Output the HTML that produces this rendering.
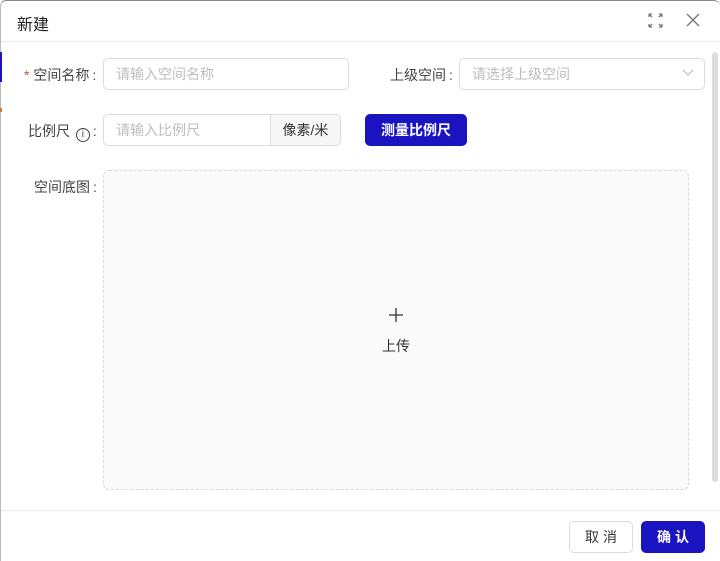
<!DOCTYPE html>
<html><head><meta charset="utf-8"><style>
*{box-sizing:border-box;margin:0;padding:0}
body{width:720px;height:561px;overflow:hidden;background:#fff;font-family:"Liberation Sans","Noto Sans CJK SC",sans-serif;font-size:14px;color:#333;position:relative}
.frame{position:absolute;left:0;top:0;width:720px;height:561px;border-top:1px solid #888;border-left:1px solid #bbb;border-radius:6px 6px 0 0}
.abs{position:absolute}
.title{left:17px;top:11px;font-size:16px;color:#222}
.hline{left:1px;right:0;height:1px;background:#eaeaea}
.lbl{font-size:14px;color:#444;white-space:nowrap}
.c{margin-left:3px}
.inp{border:1px solid #dcdcdc;border-radius:5px;background:#fff;color:#bdbdbd;font-size:14px;padding-left:12px;line-height:30px}
.btn{border-radius:5px;text-align:center;font-size:14px}
</style></head><body>
<div class="frame"></div>
<div class="abs title">新建</div>
<svg class="abs" style="left:648px;top:13px" width="15" height="15" viewBox="0 0 15 15" stroke="#777" stroke-width="1.3" fill="none"><path d="M1 1l3 3M14 1l-3 3M1 14l3-3M14 14l-3-3M1 1v3M1 1h3M14 1v3M14 1h-3M1 14v-3M1 14h3M14 14v-3M14 14h-3"/></svg>
<svg class="abs" style="left:686px;top:13px" width="14" height="14" viewBox="0 0 14 14" stroke="#777" stroke-width="1.4"><path d="M1 1l12 12M13 1L1 13"/></svg>
<div class="abs hline" style="top:41px"></div>
<div class="abs" style="left:0;top:52px;width:2px;height:30px;background:#1a13c0"></div>
<div class="abs" style="left:0;top:108px;width:2px;height:4px;background:#d08030"></div>
<div class="abs" style="left:712px;top:52px;width:6px;height:430px;background:#dedede;border-radius:3px"></div>

<div class="abs lbl" style="left:24px;top:65px"><span style="color:#c0502a">*</span> 空间名称<span class="c">:</span></div>
<div class="abs inp" style="left:103px;top:58px;width:246px;height:32px">请输入空间名称</div>
<div class="abs lbl" style="left:390px;top:65px">上级空间<span class="c">:</span></div>
<div class="abs inp" style="left:459px;top:58px;width:246px;height:32px">请选择上级空间</div>
<svg class="abs" style="left:682px;top:69px" width="12" height="8" viewBox="0 0 12 8" stroke="#bbb" stroke-width="1.2" fill="none"><path d="M1 1l5 5 5-5"/></svg>

<div class="abs lbl" style="left:28px;top:121px">比例尺 <span style="display:inline-block;margin-left:2px;width:14px;height:14px;border:1.3px solid #444;border-radius:50%;font-size:10px;line-height:11px;text-align:center;vertical-align:-1px">i</span><span class="c">:</span></div>
<div class="abs inp" style="left:103px;top:114px;width:238px;height:32px">请输入比例尺</div>
<div class="abs" style="left:270px;top:114px;width:71px;height:32px;background:#f7f7f7;border:1px solid #dcdcdc;border-radius:0 5px 5px 0;color:#333;text-align:center;line-height:30px">像素/米</div>
<div class="abs btn" style="left:365px;top:114px;width:102px;height:32px;background:#1a13c0;color:#fff;font-weight:bold;line-height:32px">测量比例尺</div>

<div class="abs lbl" style="left:34px;top:177px">空间底图<span class="c">:</span></div>
<div class="abs" style="left:103px;top:170px;width:586px;height:320px;background:#fafafa;border:1px dashed #d9d9d9;border-radius:6px"></div>
<svg class="abs" style="left:389px;top:308px" width="14" height="14" viewBox="0 0 14 14" stroke="#333" stroke-width="1.3"><path d="M7 0v14M0 7h14"/></svg>
<div class="abs" style="left:382px;top:336px;font-size:14px;color:#333">上传</div>

<div class="abs hline" style="top:510px"></div>
<div class="abs btn" style="left:569px;top:521px;width:64px;height:32px;border:1px solid #dcdcdc;line-height:30px;color:#333;letter-spacing:4px;padding-left:4px">取消</div>
<div class="abs btn" style="left:641px;top:521px;width:64px;height:32px;background:#1a13c0;color:#fff;font-weight:bold;line-height:32px;letter-spacing:4px;padding-left:4px">确认</div>
</body></html>
